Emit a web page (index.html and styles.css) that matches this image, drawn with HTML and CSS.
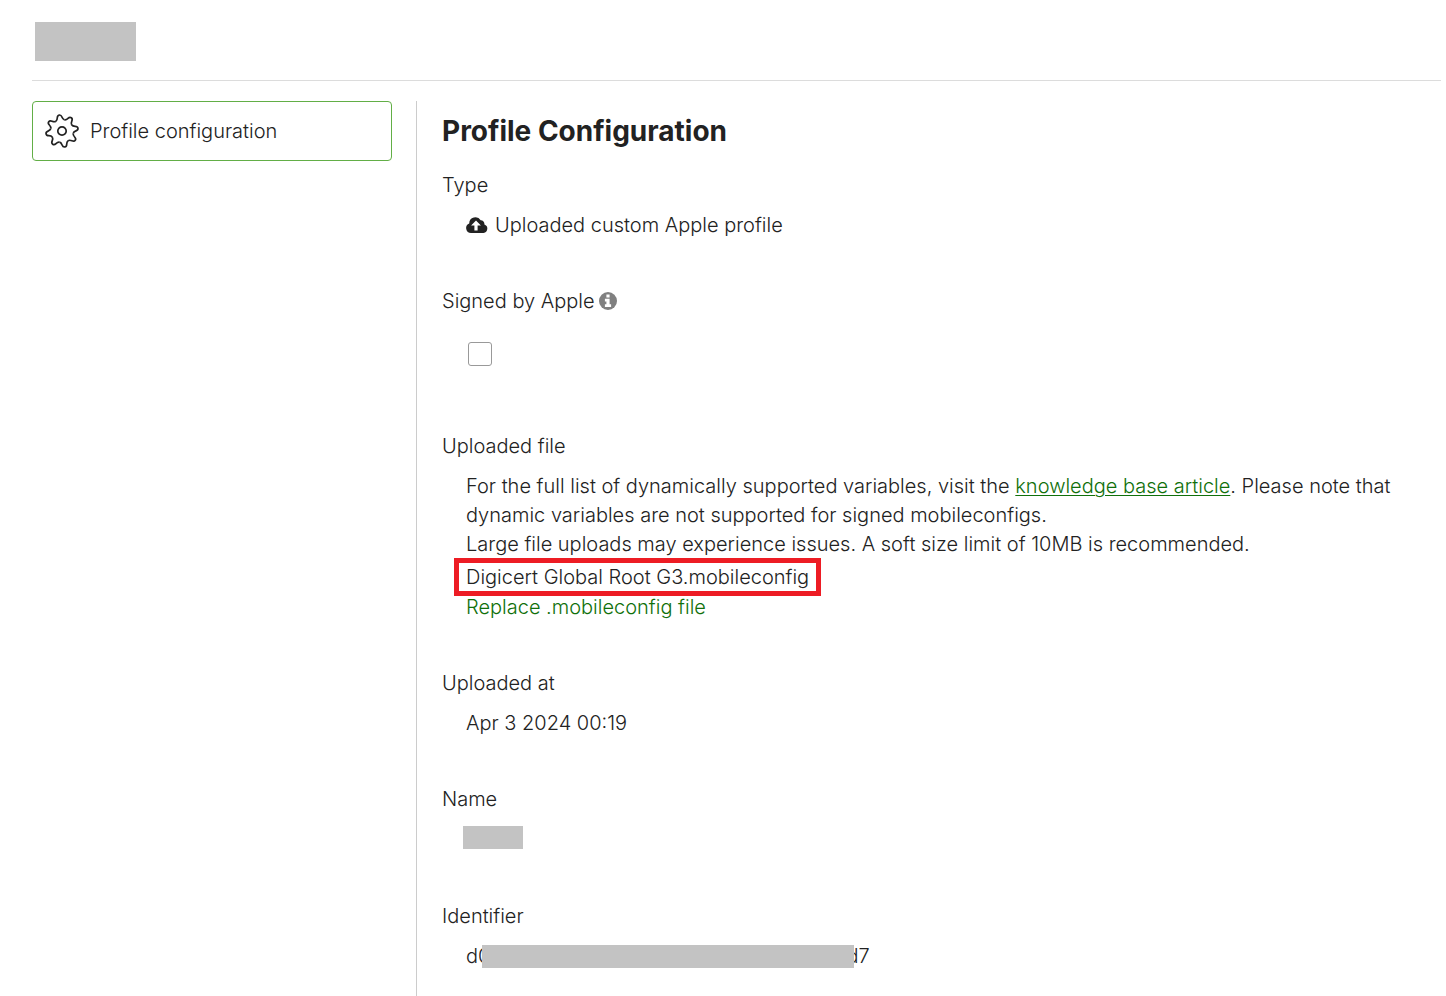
FILE: index.html
```
<!DOCTYPE html>
<html lang="en">
<head>
    <meta charset="UTF-8">
    <meta name="viewport" content="width=device-width, initial-scale=1.0">
    <title>Profile Configuration</title>
    <link rel="stylesheet" href="styles.css">
</head>
<body>
    <header class="page-header">
        <div class="redacted redacted-title"></div>
    </header>

    <div class="layout">
        <nav class="sidebar">
            <a href="#profile" class="nav-item">
                <svg class="gear" viewBox="-18 -18 36 36" aria-hidden="true">
                    <defs>
                        <path id="tooth" d="M-4.4-10.6C-1.1-12-3.6-16.2 0-16.2C3.6-16.2 1.1-12 4.4-10.6"/>
                    </defs>
                    <g transform="rotate(-10)">
                        <use href="#tooth"/>
                        <use href="#tooth" transform="rotate(45)"/>
                        <use href="#tooth" transform="rotate(90)"/>
                        <use href="#tooth" transform="rotate(135)"/>
                        <use href="#tooth" transform="rotate(180)"/>
                        <use href="#tooth" transform="rotate(225)"/>
                        <use href="#tooth" transform="rotate(270)"/>
                        <use href="#tooth" transform="rotate(315)"/>
                    </g>
                    <circle r="4.2"/>
                </svg>
                <span>Profile configuration</span>
            </a>
        </nav>

        <main class="content" id="profile">
            <h1>Profile Configuration</h1>

            <section class="field">
                <h2>Type</h2>
                <div class="value with-icon">
                    <svg class="cloud" viewBox="0 0 22 16" aria-hidden="true">
                        <path fill="#222" d="M5 16A5 5 0 0 1 3.2 6.4A6.2 6.2 0 0 1 14.7 3.3A3.7 3.7 0 0 1 18.4 7.5A4.4 4.4 0 0 1 17.5 16Z"/>
                        <path fill="#fff" d="M10 3.4L14.9 8.6H11.6V13.4H8.4V8.6H5.1Z"/>
                    </svg>
                    <span>Uploaded custom Apple profile</span>
                </div>
            </section>

            <section class="field">
                <h2>
                    <label for="signed">Signed by Apple</label>
                    <svg class="info" viewBox="0 0 18 18" aria-hidden="true">
                        <circle cx="9" cy="9" r="9" fill="#808080"/>
                        <path fill="#fff" d="M7.4 2.6H10.6V5.6H7.4ZM5.9 6.8H10.6V12.3H12.1V15H5.9V12.3H7.4V9.4H5.9Z"/>
                    </svg>
                </h2>
                <div class="value check-value">
                    <input type="checkbox" id="signed">
                </div>
            </section>

            <section class="field">
                <h2>Uploaded file</h2>
                <div class="value">
                    <p>For the full list of dynamically supported variables, visit the <a href="#kb" class="underlined">knowledge base article</a>. Please note that dynamic variables are not supported for signed mobileconfigs.</p>
                    <p>Large file uploads may experience issues. A soft size limit of 10MB is recommended.</p>
                    <div class="file-name">Digicert Global Root G3.mobileconfig</div>
                    <a href="#replace" class="replace">Replace .mobileconfig file</a>
                </div>
            </section>

            <section class="field">
                <h2>Uploaded at</h2>
                <div class="value">Apr 3 2024 00:19</div>
            </section>

            <section class="field">
                <h2>Name</h2>
                <div class="value name-value">
                    <div class="redacted redacted-name"></div>
                </div>
            </section>

            <section class="field">
                <h2>Identifier</h2>
                <div class="value identifier">
                    <span>d0</span>
                    <div class="redacted redacted-id"></div>
                    <span>d7</span>
                </div>
            </section>
        </main>
    </div>
</body>
</html>
```
FILE: styles.css
```
* {
    box-sizing: border-box;
}

body {
    margin: 0;
    padding: 0 5px 0 32px;
    min-height: 100vh;
    display: flex;
    flex-direction: column;
    overflow-y: hidden;
    background: #fff;
    color: #222;
    font-family: Inter, "Liberation Sans", sans-serif;
    font-size: 20px;
    font-weight: 300;
    line-height: 29px;
}

h1,
h2,
p {
    margin: 0;
}

a {
    color: #10700a;
    text-decoration: none;
}

.page-header {
    padding: 22px 3px 19px;
    border-bottom: 1px solid #dcdcdc;
}

.redacted {
    background: #c3c3c3;
}

.redacted-title {
    width: 101px;
    height: 39px;
}

.layout {
    flex: 1;
    display: flex;
    gap: 24px;
    padding-top: 20px;
}

/* Sidebar */
.sidebar {
    flex: 0 0 360px;
}

.nav-item {
    display: flex;
    align-items: center;
    gap: 10px;
    height: 60px;
    padding: 0 11px;
    border: 1px solid #62ae46;
    border-radius: 4px;
    color: #222;
}

.gear {
    width: 36px;
    height: 36px;
    fill: none;
    stroke: #222;
    stroke-width: 1.7;
}

/* Main column */
.content {
    flex: 1;
    padding: 12px 24px 0 25px;
    border-left: 1px solid #ccc;
}

.content h1 {
    margin-bottom: 22px;
    font-size: 28px;
    font-weight: 700;
    line-height: 36px;
}

.field {
    margin-bottom: 47px;
}

.field:last-child {
    margin-bottom: 0;
    padding-bottom: 24px;
}

.field h2 {
    display: flex;
    align-items: center;
    gap: 4px;
    margin-bottom: 11px;
    font-size: 20px;
    font-weight: 300;
}

.value {
    padding-left: 24px;
}

.with-icon {
    display: flex;
    align-items: center;
    gap: 7px;
}

.cloud {
    width: 22px;
    height: 16px;
    margin-bottom: 2px;
}

.info {
    width: 18px;
    height: 18px;
    margin-bottom: 2px;
}

.check-value {
    height: 58px;
    padding: 15px 0 0 26px;
}

.check-value input {
    appearance: none;
    display: block;
    width: 24px;
    height: 24px;
    margin: 0;
    border: 1px solid #999;
    border-radius: 3px;
    background: #fff;
}

.check-value input:checked {
    background: #62ae46;
}

.underlined {
    text-decoration: underline;
    text-decoration-thickness: 1px;
    text-underline-offset: 2px;
}

.file-name {
    width: fit-content;
    margin: -1px 0 0 -12px;
    padding: 0 7px;
    border: 5px solid #ed1c24;
    line-height: 28px;
}

.replace {
    display: block;
    width: fit-content;
    margin-top: -3px;
}

.name-value {
    height: 30px;
    padding: 1px 0 0 21px;
}

.redacted-name {
    width: 60px;
    height: 23px;
}

/* The bar hides the middle of the id and clips the characters next to it */
.identifier {
    display: flex;
    align-items: center;
}

.redacted-id {
    position: relative;
    width: 372px;
    height: 23px;
    margin: 0 -8px;
}
```
